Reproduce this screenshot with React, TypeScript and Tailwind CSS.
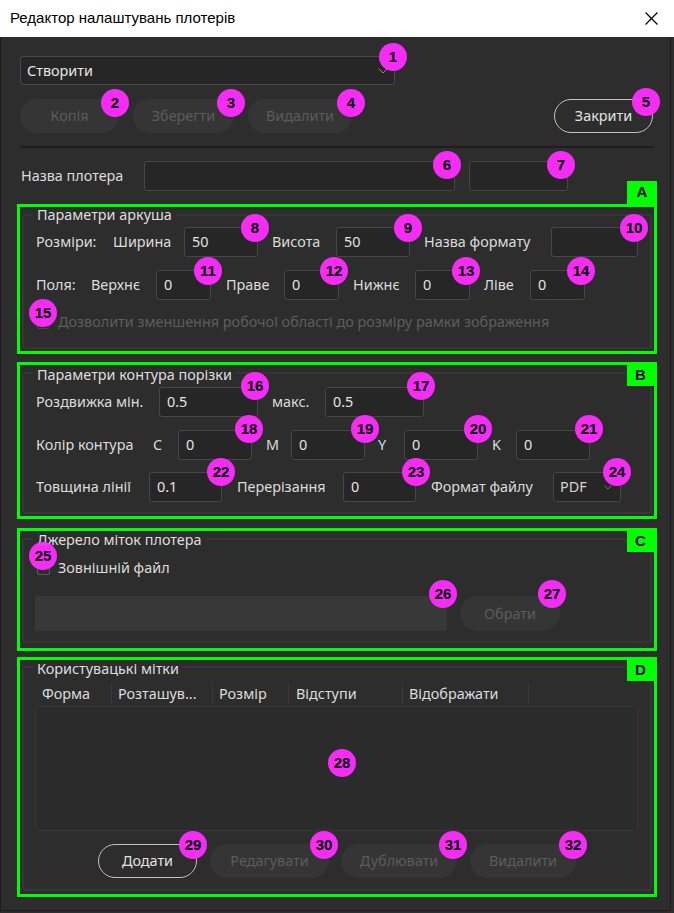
import type { ReactNode } from "react";

const badges: [number, number, number][] = [
  [1, 393, 57], [2, 115, 103], [3, 231, 103], [4, 351, 103], [5, 646, 102],
  [6, 447, 165], [7, 561, 165], [8, 255, 228], [9, 408, 228], [10, 634, 228],
  [11, 208, 271], [12, 334, 271], [13, 466, 271], [14, 581, 271], [15, 43, 313],
  [16, 255, 386], [17, 421, 386], [18, 249, 429], [19, 365, 429], [20, 478, 429],
  [21, 589, 429], [22, 221, 472], [23, 416, 472], [24, 617, 472], [25, 43, 556],
  [26, 443, 594], [27, 552, 594], [28, 342, 763], [29, 193, 845], [30, 324, 845],
  [31, 453, 845], [32, 573, 845],
];

const Field = ({ className = "", value }: { className?: string; value?: string }) => (
  <div
    className={`h-[30px] shrink-0 rounded-[3px] border border-[#474747] bg-[#262626] pl-[7px] leading-[28px] text-[#e4e4e4] ${className}`}
  >
    {value}
  </div>
);

const Pill = ({
  className = "",
  active,
  children,
}: {
  className?: string;
  active?: boolean;
  children: ReactNode;
}) => (
  <div
    className={`flex shrink-0 items-center justify-center rounded-full ${
      active ? "border border-[#c2c2c2] text-[#e2e2e2]" : "bg-[#353535] text-[#5c5c5c]"
    } ${className}`}
  >
    {children}
  </div>
);

const Chevron = ({ className = "" }: { className?: string }) => (
  <svg viewBox="0 0 10 6" className={className} fill="none" stroke="#8c8c8c" strokeWidth="1">
    <polyline points="0.5,0.5 5,5 9.5,0.5" />
  </svg>
);

const Box = ({ className = "" }: { className?: string }) => (
  <span className={`h-[13px] w-[13px] shrink-0 rounded-[2px] border border-[#5a5a5a] ${className}`} />
);

const Section = ({
  tag,
  title,
  className,
  tagClass,
  frameClass,
  titleClass,
  children,
}: {
  tag: string;
  title: string;
  className: string;
  tagClass: string;
  frameClass: string;
  titleClass: string;
  children: ReactNode;
}) => (
  <div className={`relative w-[640px] border-[3px] border-[#00ff00] ${className}`}>
    <div
      className={`absolute flex items-center justify-center bg-[#00ff00] font-['Liberation_Sans',sans-serif] text-[15px] font-bold text-black ${tagClass}`}
    >
      {tag}
    </div>
    <div className={`mx-[2px] rounded-[3px] border-2 border-[#363636] ${frameClass}`}>
      <div className={`ml-[9px] w-fit bg-[#2d2d2d] px-[4px] leading-[16px] text-[#dedede] ${titleClass}`}>
        {title}
      </div>
      {children}
    </div>
  </div>
);

export default function App() {
  return (
    <div className="relative h-[913px] w-[674px] bg-[#2d2d2d] font-['Noto_Sans','DejaVu_Sans',sans-serif] text-[14.4px] text-[#dcdcdc]">
      <header className="flex h-[37px] items-center justify-between bg-white pl-[10px] pr-[16px] font-['Liberation_Sans',sans-serif] text-[15px] text-black">
        <span>Редактор налаштувань плотерів</span>
        <svg viewBox="0 0 12 12" className="h-[13px] w-[13px]" stroke="#000" strokeWidth="1.1">
          <line x1="0.5" y1="0.5" x2="11.5" y2="11.5" />
          <line x1="11.5" y1="0.5" x2="0.5" y2="11.5" />
        </svg>
      </header>

      <main className="h-[874px] w-[671px] border-x border-b border-[#1c1c1c] pl-[16px] pt-[19px]">
        <div className="ml-[3px] w-[634px]">
          <div className="flex h-[29px] w-[375px] items-center justify-between rounded-[3px] border border-[#484848] bg-[#262626] pl-[6px] pr-[6px] text-[#e6e6e6]">
            <span>Створити</span>
            <Chevron className="h-[6px] w-[10px]" />
          </div>

          <div className="mt-[14px] flex h-[34px]">
            <Pill className="w-[99px]">Копія</Pill>
            <Pill className="ml-[14px] w-[101px]">Зберегти</Pill>
            <Pill className="ml-[14px] w-[104px]">Видалити</Pill>
            <Pill active className="ml-auto mr-[1px] w-[99px]">
              Закрити
            </Pill>
          </div>

          <div className="mt-[13px] h-[2px] w-[634px] bg-[#1d1d1d]" />

          <div className="mt-[13px] flex h-[30px] items-center">
            <span className="ml-[1px] w-[123px] shrink-0">Назва плотера</span>
            <Field className="w-[311px]" />
            <Field className="ml-[14px] w-[99px]" />
          </div>
        </div>

        <Section
          tag="A"
          title="Параметри аркуша"
          className="mt-[13px] h-[150px]"
          tagClass="-right-[3px] -top-[26px] h-[23px] w-[30px]"
          frameClass="mt-[7px] h-[135px]"
          titleClass="-mt-[9px]"
        >
          <div className="mt-[4px] flex h-[30px] items-center pl-[12px]">
            <span className="w-[77px] shrink-0">Розміри:</span>
            <span className="w-[71px] shrink-0">Ширина</span>
            <Field className="w-[74px]" value="50" />
            <span className="ml-[14px] w-[64px] shrink-0">Висота</span>
            <Field className="w-[74px]" value="50" />
            <span className="ml-[14px] w-[127px] shrink-0">Назва формату</span>
            <Field className="w-[87px]" />
          </div>
          <div className="mt-[13px] flex h-[30px] items-center pl-[12px]">
            <span className="w-[55px] shrink-0">Поля:</span>
            <span className="w-[65px] shrink-0">Верхнє</span>
            <Field className="w-[55px]" value="0" />
            <span className="ml-[15px] w-[58px] shrink-0">Праве</span>
            <Field className="w-[55px]" value="0" />
            <span className="ml-[14px] w-[62px] shrink-0">Нижнє</span>
            <Field className="w-[55px]" value="0" />
            <span className="ml-[14px] w-[46px] shrink-0">Ліве</span>
            <Field className="w-[55px]" value="0" />
          </div>
          <div className="mt-[12px] flex h-[20px] items-center gap-[8px] pl-[13px] text-[#5e5e5e]">
            <Box className="border-[#484848]" />
            <span>Дозволити зменшення робочої області до розміру рамки зображення</span>
          </div>
        </Section>

        <Section
          tag="B"
          title="Параметри контура порізки"
          className="mt-[8px] h-[157px]"
          tagClass="right-0 top-0 h-[21px] w-[27px]"
          frameClass="mt-[7px] h-[142px]"
          titleClass="-mt-[7px]"
        >
          <div className="mt-[4px] flex h-[30px] items-center pl-[12px]">
            <span className="w-[123px] shrink-0">Роздвижка мін.</span>
            <Field className="w-[99px]" value="0.5" />
            <span className="ml-[14px] w-[53px] shrink-0">макс.</span>
            <Field className="w-[99px]" value="0.5" />
          </div>
          <div className="mt-[13px] flex h-[30px] items-center pl-[12px]">
            <span className="w-[117px] shrink-0">Колір контура</span>
            <span className="w-[25px] shrink-0">C</span>
            <Field className="w-[74px]" value="0" />
            <span className="ml-[14px] w-[25px] shrink-0">M</span>
            <Field className="w-[74px]" value="0" />
            <span className="ml-[13px] w-[26px] shrink-0">Y</span>
            <Field className="w-[74px]" value="0" />
            <span className="ml-[14px] w-[24px] shrink-0">K</span>
            <Field className="w-[74px]" value="0" />
          </div>
          <div className="mt-[12px] flex h-[30px] items-center pl-[12px]">
            <span className="w-[113px] shrink-0">Товщина лінії</span>
            <Field className="w-[73px]" value="0.1" />
            <span className="ml-[15px] w-[106px] shrink-0">Перерізання</span>
            <Field className="w-[73px]" value="0" />
            <span className="ml-[15px] w-[122px] shrink-0">Формат файлу</span>
            <div className="flex h-[30px] w-[68px] shrink-0 items-center justify-between rounded-[3px] border border-[#474747] bg-[#262626] pl-[6px] pr-[8px] text-[#d4d4d4]">
              <span>PDF</span>
              <Chevron className="h-[5px] w-[8px]" />
            </div>
          </div>
        </Section>

        <Section
          tag="C"
          title="Джерело міток плотера"
          className="mt-[9px] h-[123px]"
          tagClass="right-0 top-0 h-[21px] w-[27px]"
          frameClass="mt-[7px] h-[105px]"
          titleClass="-mt-[8px]"
        >
          <div className="mt-[10px] flex h-[20px] items-center gap-[8px] pl-[13px]">
            <Box />
            <span>Зовнішній файл</span>
          </div>
          <div className="mt-[18px] flex h-[35px] pl-[11px]">
            <div className="w-[412px] rounded-[2px] bg-[#383838]" />
            <Pill className="ml-[13px] w-[100px]">Обрати</Pill>
          </div>
        </Section>

        <Section
          tag="D"
          title="Користувацькі мітки"
          className="mt-[6px] h-[240px]"
          tagClass="right-0 top-0 h-[21px] w-[27px]"
          frameClass="mt-[6px] h-[225px]"
          titleClass="-mt-[7px]"
        >
          <div className="ml-[11px] mt-[6px] flex h-[21px] items-center">
            <span className="w-[77px] border-r border-[#3a3a3a] pl-[7px]">Форма</span>
            <span className="w-[101px] border-r border-[#3a3a3a] pl-[6px]">Розташув...</span>
            <span className="w-[76px] border-r border-[#3a3a3a] pl-[6px]">Розмір</span>
            <span className="w-[114px] border-r border-[#3a3a3a] pl-[7px]">Відступи</span>
            <span className="w-[126px] border-r border-[#3a3a3a] pl-[6px]">Відображати</span>
          </div>
          <div className="ml-[11px] mt-[2px] h-[125px] w-[603px] rounded-[3px] border border-[#363636] bg-[#2b2b2b]" />
          <div className="mt-[13px] flex h-[34px] justify-center">
            <Pill active className="w-[99px]">
              Додати
            </Pill>
            <Pill className="ml-[13px] w-[119px]">Редагувати</Pill>
            <Pill className="ml-[12px] w-[116px]">Дублювати</Pill>
            <Pill className="ml-[13px] w-[106px]">Видалити</Pill>
          </div>
        </Section>
      </main>

      {badges.map(([n, x, y]) => (
        <div
          key={n}
          className="absolute flex h-[28px] w-[28px] items-center justify-center rounded-full bg-[#ff2cff]/95 font-['Liberation_Sans',sans-serif] text-[15px] font-bold text-black"
          style={{ left: x - 14, top: y - 14 }}
        >
          {n}
        </div>
      ))}
    </div>
  );
}
